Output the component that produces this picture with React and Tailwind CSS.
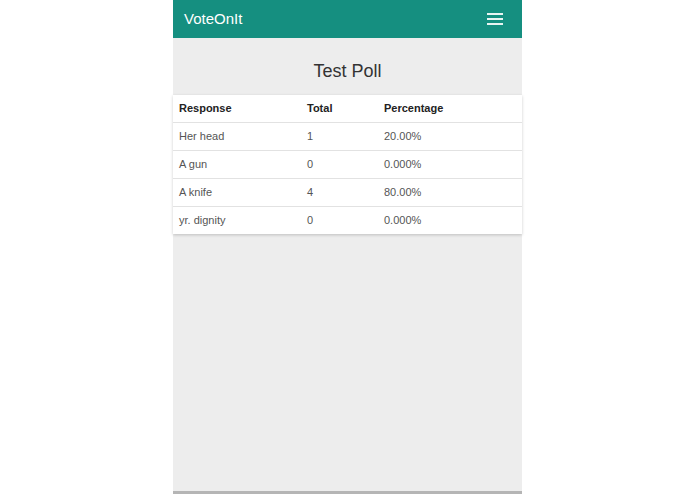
const rows = [
  { response: "Her head", total: 1, pct: "20.00%" },
  { response: "A gun", total: 0, pct: "0.000%" },
  { response: "A knife", total: 4, pct: "80.00%" },
  { response: "yr. dignity", total: 0, pct: "0.000%" },
];

export default function App() {
  return (
    <div
      className="w-full h-[494px] bg-white flex justify-center"
      style={{ fontFamily: '"Liberation Sans", Arial, sans-serif' }}
    >
      <div className="w-[349px] h-full bg-[#ededed] flex flex-col border-b-[3px] border-[#b5b5b5]">
        <header className="h-[38px] bg-[#158f80] flex items-center justify-between pl-[11px] pr-[19px] shrink-0">
          <span className="text-white text-[15px]">VoteOnIt</span>
          <button className="flex flex-col gap-[3px]">
            <span className="block w-[16px] h-[2px] bg-white/90"></span>
            <span className="block w-[16px] h-[2px] bg-white/90"></span>
            <span className="block w-[16px] h-[2px] bg-white/90"></span>
          </button>
        </header>

        <div className="h-[57px] flex items-center justify-center shrink-0">
          <h1 className="text-[18px] text-[#333] pt-[10px]">Test Poll</h1>
        </div>

        <table className="w-full bg-white text-[11px] text-[#555] shadow-[0_1px_3px_rgba(0,0,0,0.2)] border-collapse">
          <thead>
            <tr className="h-[27px] border-b border-[#e2e2e2]">
              <th className="text-left font-bold text-[#222] pl-[6px] w-[134px]">Response</th>
              <th className="text-left font-bold text-[#222] w-[77px]">Total</th>
              <th className="text-left font-bold text-[#222]">Percentage</th>
            </tr>
          </thead>
          <tbody>
            {rows.map((r, i) => (
              <tr
                key={r.response}
                className={`h-[28px] ${i < rows.length - 1 ? "border-b border-[#e2e2e2]" : ""}`}
              >
                <td className="pl-[6px]">{r.response}</td>
                <td>{r.total}</td>
                <td>{r.pct}</td>
              </tr>
            ))}
          </tbody>
        </table>
      </div>
    </div>
  );
}
